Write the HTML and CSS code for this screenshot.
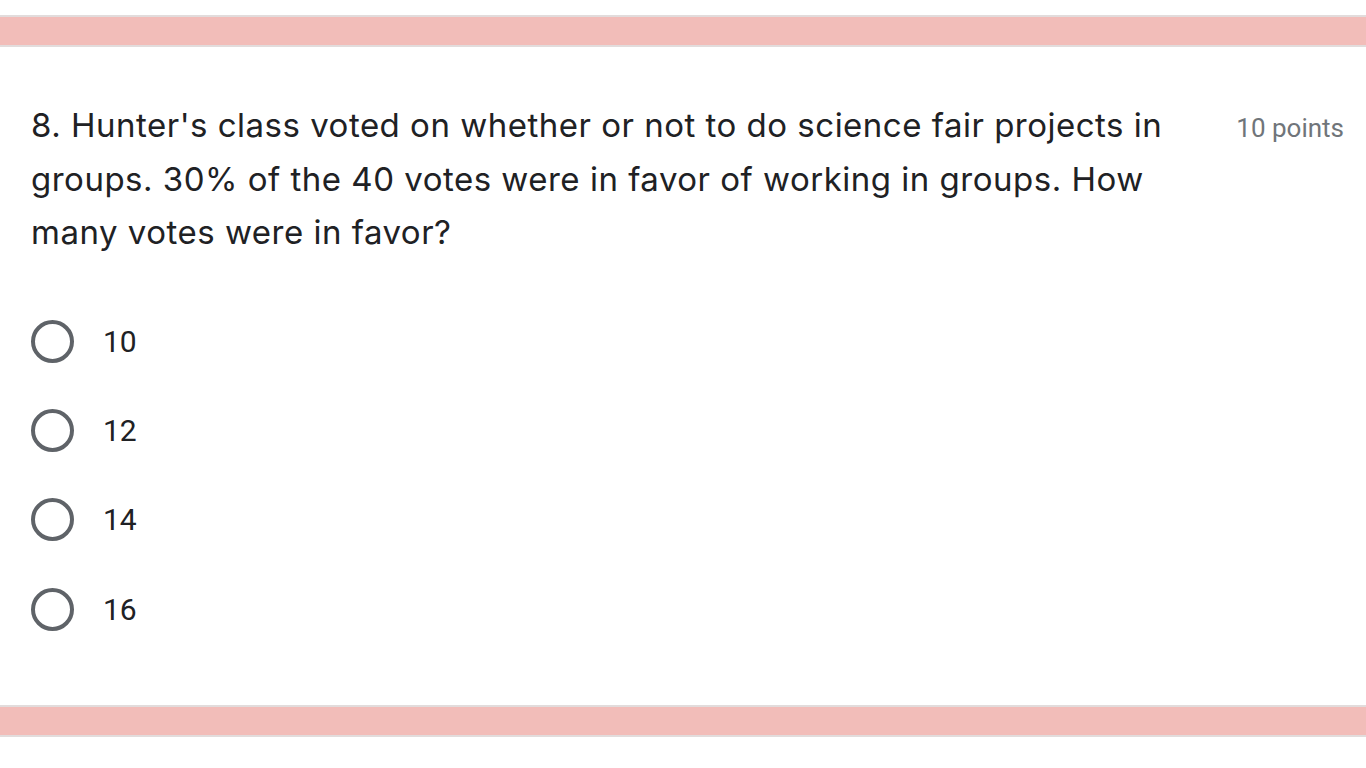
FILE: index.html
```html
<!DOCTYPE html>
<html lang="en">
<head>
<meta charset="utf-8">
<title>Question 8</title>
<link rel="stylesheet" href="styles.css">
</head>
<body>
<div class="page">
  <div class="band"></div>
  <section class="card">
    <div class="question-row">
      <div class="question-text">8. Hunter's class voted on whether or not to do science fair projects in groups. 30% of the 40 votes were in favor of working in groups. How many votes were in favor?</div>
      <div class="points">10 points</div>
    </div>
    <div class="options">
      <label class="option"><span class="radio"></span><span class="option-label">10</span></label>
      <label class="option"><span class="radio"></span><span class="option-label">12</span></label>
      <label class="option"><span class="radio"></span><span class="option-label">14</span></label>
      <label class="option"><span class="radio"></span><span class="option-label">16</span></label>
    </div>
  </section>
  <div class="band"></div>
</div>
</body>
</html>
```
FILE: styles.css
```css
html, body {
  margin: 0;
  padding: 0;
  background: #ffffff;
}
.page {
  padding-top: 15px;
  display: flex;
  flex-direction: column;
}
.band {
  height: 28px;
  background: #f2bdb9;
  border-top: 2px solid #e2dcdc;
  border-bottom: 2px solid #e2dcdc;
}
.card {
  padding: 52px 22px 51px 31px;
  display: flex;
  flex-direction: column;
}
.question-row {
  display: flex;
  align-items: flex-start;
}
.question-text {
  flex: 1;
  font-family: Inter, "Open Sans", sans-serif;
  font-size: 33px;
  line-height: 53.5px;
  color: #202124;
  letter-spacing: 0.5px;
  padding-right: 40px;
}
.points {
  font-family: Roboto, "Liberation Sans", sans-serif;
  font-size: 26px;
  line-height: 53px;
  color: #70757a;
  white-space: nowrap;
  padding-top: 3px;
}
.options {
  margin-top: 37px;
  display: flex;
  flex-direction: column;
}
.option {
  height: 89.3px;
  display: flex;
  align-items: center;
}
.radio {
  width: 35px;
  height: 35px;
  border: 4px solid #5f6368;
  border-radius: 50%;
  flex: none;
}
.option-label {
  margin-left: 29px;
  font-family: Roboto, "Liberation Sans", sans-serif;
  font-size: 30px;
  color: #202124;
}
```
